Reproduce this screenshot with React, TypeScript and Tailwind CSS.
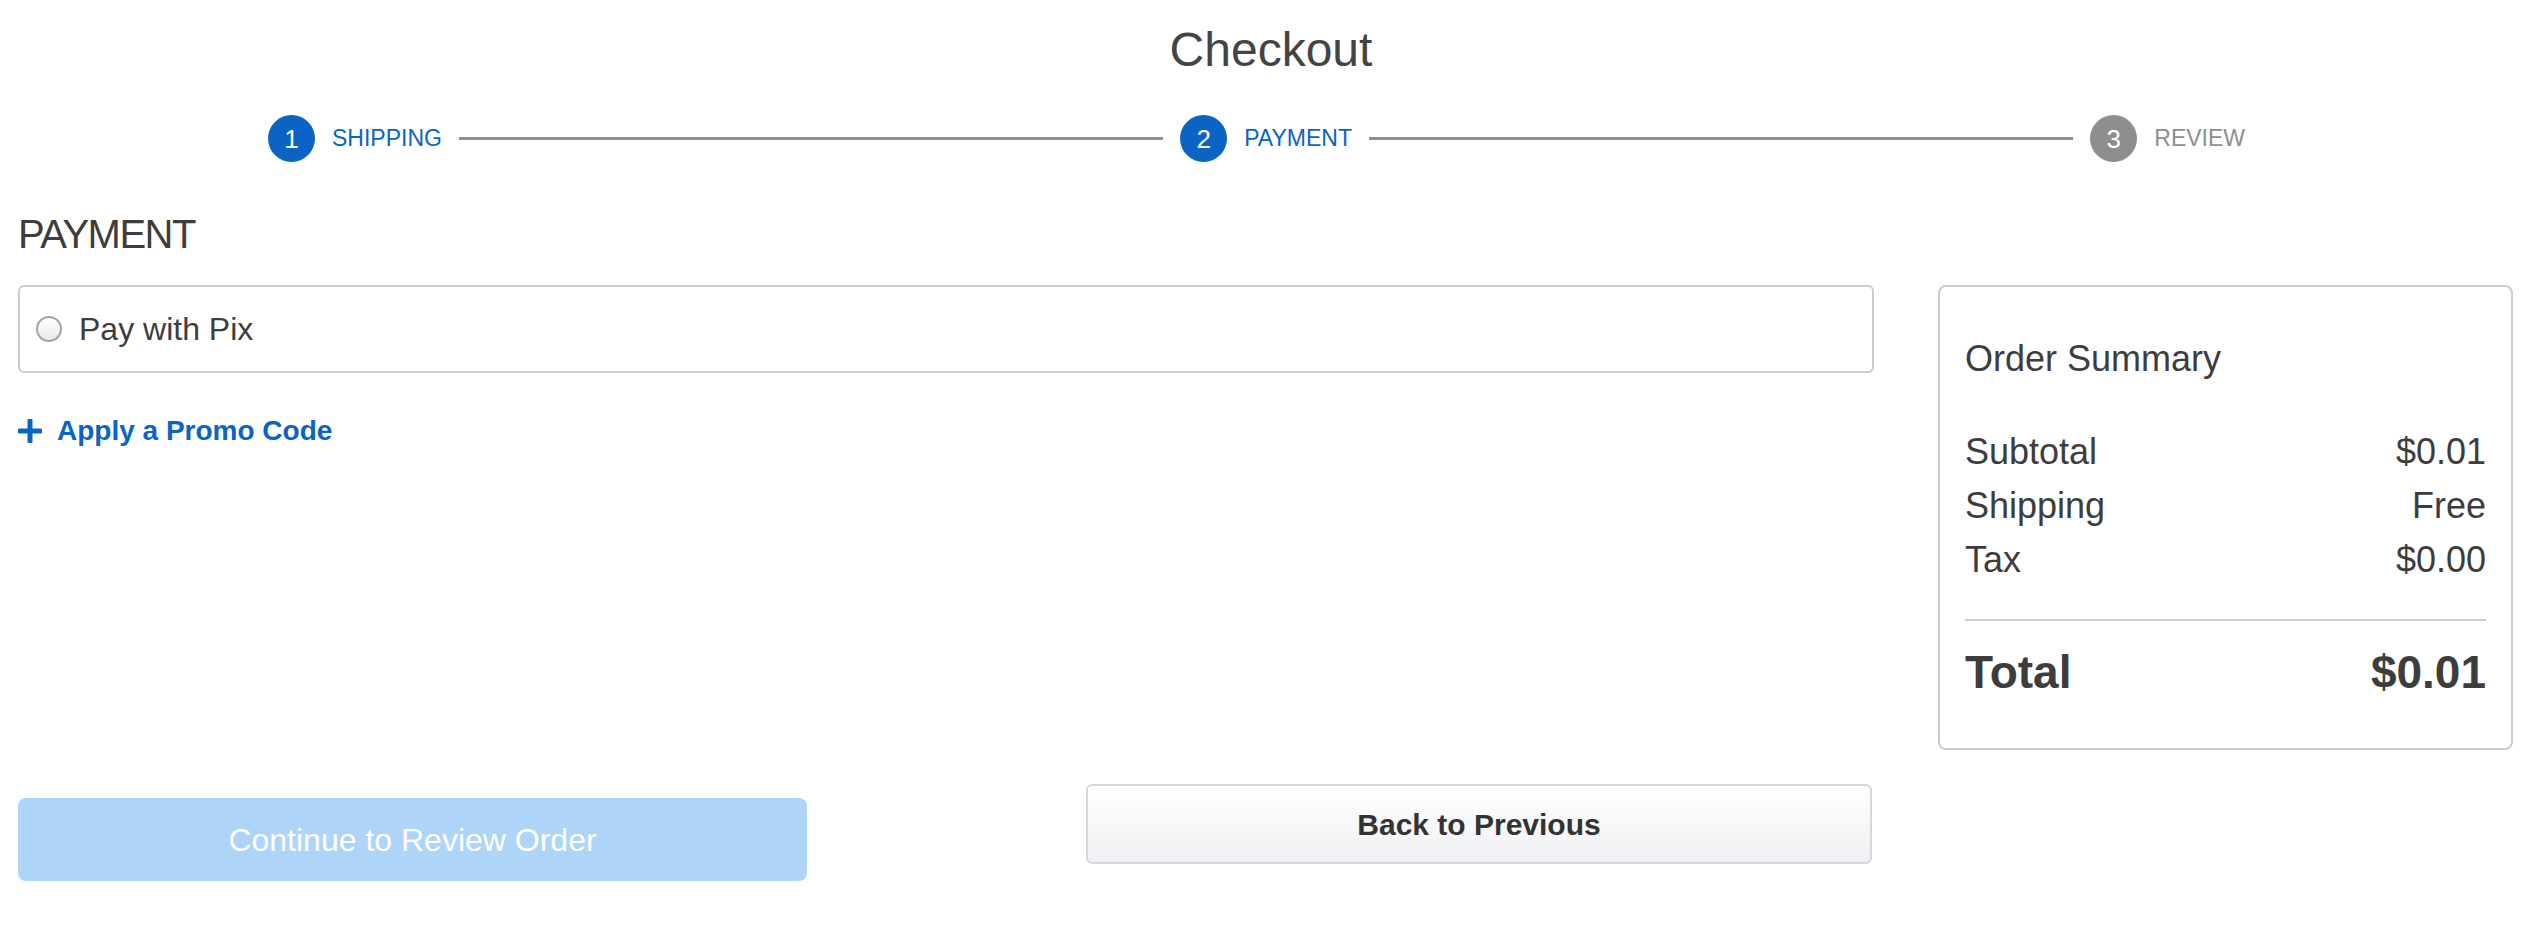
import React from "react";

function StepCircle({ n, active }: { n: number; active: boolean }) {
  return (
    <div
      className={
        "flex h-[47px] w-[47px] shrink-0 items-center justify-center rounded-full text-[26px] leading-none text-white " +
        (active ? "bg-[#0b63c5]" : "bg-[#8e8e8e]")
      }
    >
      {n}
    </div>
  );
}

function Row({ label, value }: { label: string; value: string }) {
  return (
    <div className="flex items-center justify-between text-[36px] leading-[54px] text-[#3d3d3d]">
      <span>{label}</span>
      <span>{value}</span>
    </div>
  );
}

export default function App() {
  return (
    <div className="min-h-[926px] bg-white px-[18px] font-['Liberation_Sans',Arial,sans-serif] text-[#3d3d3d]">
      <h1 className="pt-[21px] text-center text-[48px] font-normal leading-[58px] text-[#444444]">
        Checkout
      </h1>

      <div className="ml-[250px] mt-[36px] flex h-[47px] w-[1977px] items-center">
        <StepCircle n={1} active />
        <span className="ml-[17px] text-[23px] leading-none text-[#0b63c5]">SHIPPING</span>
        <div className="mx-[17px] h-[3px] flex-1 bg-[#8f8f8f]" />
        <StepCircle n={2} active />
        <span className="ml-[17px] text-[23px] leading-none text-[#0b63c5]">PAYMENT</span>
        <div className="mx-[17px] h-[3px] flex-1 bg-[#8f8f8f]" />
        <StepCircle n={3} active={false} />
        <span className="ml-[17px] text-[23px] leading-none text-[#8e8e8e]">REVIEW</span>
      </div>

      <h2 className="mt-[48px] text-[40px] font-normal leading-[48px] tracking-[-1.5px] text-[#3d3d3d]">
        PAYMENT
      </h2>

      <div className="mt-[27px] flex items-start gap-[64px]">
        <div className="w-[1856px] shrink-0">
          <div className="flex h-[88px] items-center rounded-[6px] border-2 border-[#c9cdd1] pl-[16px]">
            <div className="h-[26px] w-[26px] rounded-full border-2 border-[#a3a3a3] bg-linear-to-b from-white to-[#e6e8ec]" />
            <span className="ml-[17px] text-[32px] leading-[40px] text-[#3d3d3d]">Pay with Pix</span>
          </div>

          <div className="mt-[41px] flex h-[34px] items-center">
            <svg width="24" height="24" viewBox="0 0 24 24" className="shrink-0">
              <rect x="9.5" y="0" width="5" height="24" rx="1" fill="#0b63c5" />
              <rect x="0" y="9.5" width="24" height="5" rx="1" fill="#0b63c5" />
            </svg>
            <span className="ml-[15px] text-[28px] font-bold leading-[34px] text-[#0b63c5]">
              Apply a Promo Code
            </span>
          </div>
        </div>

        <div className="w-[575px] shrink-0 rounded-[8px] border-2 border-[#c9cdd1] px-[25px] pb-[49px] pt-[50px]">
          <div className="text-[36px] leading-[44px] text-[#3d3d3d]">Order Summary</div>
          <div className="mt-[44px]">
            <Row label="Subtotal" value="$0.01" />
            <Row label="Shipping" value="Free" />
            <Row label="Tax" value="$0.00" />
          </div>
          <div className="mt-[32px] h-[2px] bg-[#c9cdd1]" />
          <div className="mt-[24px] flex items-center justify-between text-[46px] font-bold leading-[54px] text-[#3d3d3d]">
            <span>Total</span>
            <span>$0.01</span>
          </div>
        </div>
      </div>

      <div className="mt-[34px] flex w-[1856px] items-start justify-between">
        <button className="mt-[14px] flex h-[83px] w-[789px] items-center justify-center rounded-[8px] bg-[#aed5f7] text-[32px] text-white">
          Continue to Review Order
        </button>
        <button className="mr-[2px] flex h-[80px] w-[786px] items-center justify-center rounded-[6px] border-2 border-[#d6d8dc] bg-linear-to-b from-white to-[#eff0f3] text-[30px] font-bold text-[#333333]">
          Back to Previous
        </button>
      </div>
    </div>
  );
}
